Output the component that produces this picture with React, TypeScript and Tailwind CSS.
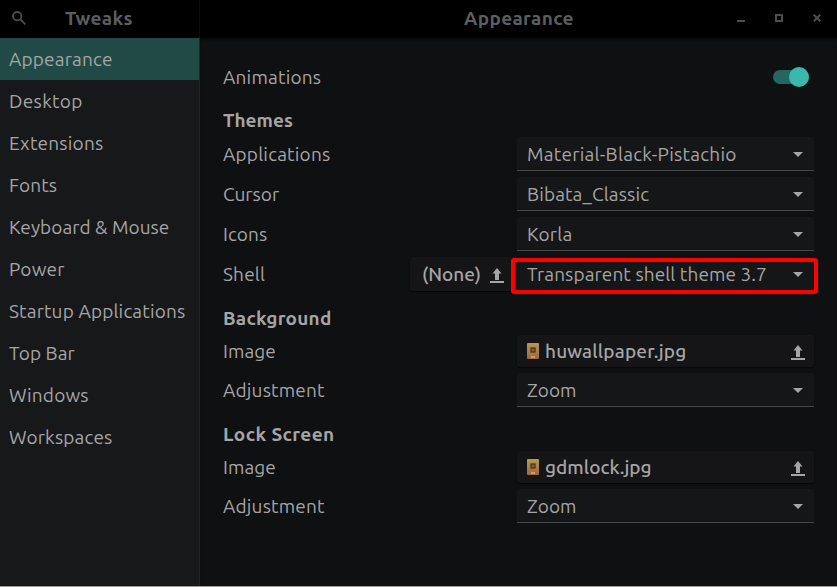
import React from "react";

const navItems = [
  { label: "Appearance", cls: "tracking-[0.18px]" },
  { label: "Desktop", cls: "tracking-[0.33px]" },
  { label: "Extensions", cls: "tracking-[0.22px]" },
  { label: "Fonts", cls: "tracking-[0.1px]" },
  { label: "Keyboard & Mouse", cls: "tracking-[0.05px]" },
  { label: "Power", cls: "tracking-[0.2px]" },
  { label: "Startup Applications", cls: "tracking-[0.16px]" },
  { label: "Top Bar", cls: "tracking-[0.08px]" },
  { label: "Windows", cls: "tracking-[0.15px]" },
  { label: "Workspaces", cls: "tracking-[0.17px]" },
];

function UploadIcon() {
  return (
    <svg width="14" height="15" viewBox="0 0 14 15" fill="#a5a5a6" className="relative top-px shrink-0">
      <path d="M7 0L11.5 5.5H9V12H5V5.5H2.5Z" />
      <path d="M0 13H14V15H0Z" />
    </svg>
  );
}

function PictureIcon() {
  return (
    <svg width="12" height="16" viewBox="0 0 12 16" className="shrink-0">
      <defs>
        <linearGradient id="thumb" x1="0" y1="0" x2="0" y2="1">
          <stop offset="0" stopColor="#b49a52" />
          <stop offset="1" stopColor="#a1663f" />
        </linearGradient>
      </defs>
      <rect width="12" height="16" rx="1" fill="url(#thumb)" />
      <rect x="4" y="5" width="4" height="4" fill="#8a6234" stroke="#49301c" strokeWidth="1.2" />
      <path d="M4 13h4v2H4z" fill="#c69a80" />
    </svg>
  );
}

function Select({ value, cls }: { value: string; cls: string }) {
  return (
    <div className="flex h-[34px] w-[297px] items-center justify-between rounded-t-[3px] border-b border-[#464748] bg-[#151617] pr-[11px] pl-[10px]">
      <span className={cls}>{value}</span>
      <svg width="10" height="5" viewBox="0 0 10 5" fill="#a5a5a6" className="relative top-px">
        <path d="M0 0H10L5 5Z" />
      </svg>
    </div>
  );
}

function FileButton({ value, cls }: { value: string; cls: string }) {
  return (
    <div className="flex h-8 w-[297px] items-center rounded-[3px] bg-[#151517] pr-[9px] pl-[10px] shadow-[0_1px_2px_#000000aa]">
      <PictureIcon />
      <span className={"ml-[6px] flex-1 font-medium " + cls}>{value}</span>
      <UploadIcon />
    </div>
  );
}

function Row({ label, cls, children }: { label: string; cls: string; children: React.ReactNode }) {
  return (
    <div className="flex items-center justify-between">
      <span className={cls}>{label}</span>
      {children}
    </div>
  );
}

export default function App() {
  return (
    <div className="flex h-[587px] w-[837px] flex-col overflow-hidden border-b border-[#9c9a99] bg-[#0f1011] font-['Ubuntu','Noto_Sans',sans-serif] text-[19px] leading-6 whitespace-nowrap text-[#a5a5a6]">
      <header className="flex h-[38px] shrink-0 bg-black text-[#5b5f61]">
        <div className="flex w-[200px] items-center border-r border-[#0d0e0e] pb-0.5">
          <svg width="14" height="14" viewBox="0 0 14 14" fill="none" stroke="#4b4e50" strokeWidth="1.8" className="ml-3">
            <circle cx="5.2" cy="5.2" r="4.2" />
            <path d="M8.3 8.3L13.3 13.3" />
          </svg>
          <h1 className="ml-[39px] font-bold tracking-[0.4px]">Tweaks</h1>
        </div>
        <div className="flex flex-1 items-center pb-0.5">
          <h1 className="ml-[264px] w-[272px] font-bold tracking-[0.34px]">Appearance</h1>
          <svg width="86" height="8" viewBox="0 0 86 8" fill="none" stroke="#4b4e50" strokeWidth="2">
            <path d="M1 7H9" />
            <path d="M40 1H46V7H40Z" />
            <path d="M77.7 0.7L84.3 7.3M84.3 0.7L77.7 7.3" />
          </svg>
        </div>
      </header>
      <div className="flex flex-1">
        <nav className="w-[200px] border-r border-[#222425] bg-[#17181a]">
          {navItems.map((item, i) => (
            <div key={item.label} className={"flex h-[42px] items-center pl-[9px] " + (i === 0 ? "bg-[#214a46]" : "")}>
              <span className={item.cls}>{item.label}</span>
            </div>
          ))}
        </nav>
        <main className="flex-1 pt-[27px] pr-[23px] pl-[23px] shadow-[inset_0_2px_2px_#00000055]">
          <Row label="Animations" cls="tracking-[0.2px]">
            <div className="mr-[5px] flex h-[20px] w-9 items-center">
              <div className="flex h-[14px] w-full items-center justify-end rounded-full bg-[#246660]">
                <div className="size-5 rounded-full bg-[#3ab8ab]" />
              </div>
            </div>
          </Row>
          <h2 className="mt-[19px] font-bold tracking-[0.05px]">Themes</h2>
          <div className="mt-[5px] flex flex-col gap-[6px]">
            <Row label="Applications" cls="tracking-[0.2px]">
              <Select value="Material-Black-Pistachio" cls="tracking-[0.26px]" />
            </Row>
            <Row label="Cursor" cls="tracking-[0px]">
              <Select value="Bibata_Classic" cls="tracking-[0.12px]" />
            </Row>
            <Row label="Icons" cls="tracking-[0.1px]">
              <Select value="Korla" cls="tracking-[0.2px]" />
            </Row>
            <Row label="Shell" cls="tracking-[0.16px]">
              <div className="flex">
                <div className="flex h-[34px] w-[107px] items-center justify-between rounded-[3px] bg-[#151517] pr-[13px] pl-3 shadow-[0_1px_2px_#000000aa]">
                  <span className="font-medium tracking-[0px]">(None)</span>
                  <UploadIcon />
                </div>
                <div className="relative">
                  <Select value="Transparent shell theme 3.7" cls="tracking-[0.1px]" />
                  <div className="absolute top-px -left-[6px] h-9 w-[307px] rounded-[3px] border-4 border-[#ff0000]" />
                </div>
              </div>
            </Row>
          </div>
          <h2 className="mt-[15px] font-bold tracking-[0.24px]">Background</h2>
          <div className="mt-[5px] flex flex-col gap-[6px]">
            <Row label="Image" cls="tracking-[0.06px]">
              <FileButton value="huwallpaper.jpg" cls="tracking-[0.18px]" />
            </Row>
            <Row label="Adjustment" cls="tracking-[0.18px]">
              <Select value="Zoom" cls="tracking-[0.1px]" />
            </Row>
          </div>
          <h2 className="mt-[15px] font-bold tracking-[0.4px]">Lock Screen</h2>
          <div className="mt-[5px] flex flex-col gap-[6px]">
            <Row label="Image" cls="tracking-[0.06px]">
              <FileButton value="gdmlock.jpg" cls="tracking-[0.04px]" />
            </Row>
            <Row label="Adjustment" cls="tracking-[0.18px]">
              <Select value="Zoom" cls="tracking-[0.1px]" />
            </Row>
          </div>
        </main>
      </div>
    </div>
  );
}
